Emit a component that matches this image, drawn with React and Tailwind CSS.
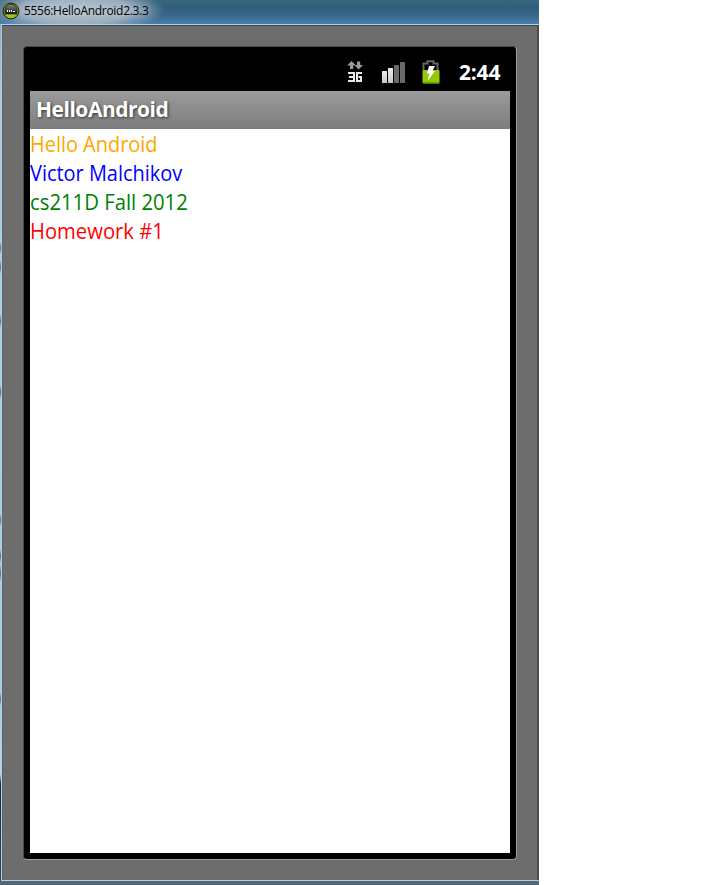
const lines = [
  { text: "Hello Android", color: "text-[#ffa500]", fit: "scale-x-[0.906]" },
  { text: "Victor Malchikov", color: "text-[#0000ff]", fit: "scale-x-[0.906]" },
  { text: "cs211D Fall 2012", color: "text-[#008000]", fit: "scale-x-[0.922]" },
  { text: "Homework #1", color: "text-[#ff0000]", fit: "scale-x-[0.920]" },
];

function AppIcon() {
  return (
    <svg width="18" height="18" viewBox="0 0 18 18" className="shrink-0">
      <defs>
        <linearGradient id="dome" x1="0" y1="0" x2="0" y2="1">
          <stop offset="0" stopColor="#8a8a8a" />
          <stop offset="1" stopColor="#111" />
        </linearGradient>
      </defs>
      <circle cx="9" cy="9" r="7.900" fill="#86a91f" stroke="#172006" strokeWidth="1" />
      <path d="M3 12V8a6 5.600 0 0 1 12 0v4z" fill="url(#dome)" stroke="#20240f" strokeWidth=".7" />
      <path d="M5 8h1v2H5zM7 8h1v2H7zM9 8h1v2H9zM11 9h2v1h-2z" fill="#fff" />
      <path d="M4.500 13.500h9M6 15.200h6" stroke="#a5dc16" strokeWidth="1.500" strokeDasharray="2 .7" />
    </svg>
  );
}

function NetworkIcon() {
  return (
    <svg width="18" height="26" viewBox="0 0 18 26">
      <path d="M4.500 1L9 5.500H6.200V9H3V5.500H0z" fill="#9a9a9a" />
      <path d="M10 1.500h3.200V5H16l-4.500 4.500L7.500 5H10z" fill="#9a9a9a" />
      <path d="M1 13h6v8H1M2 17h5" fill="none" stroke="#e8e8e8" strokeWidth="2" />
      <path d="M15 13H10v8h4v-4h-2.500" fill="none" stroke="#e8e8e8" strokeWidth="2" />
    </svg>
  );
}

function SignalIcon() {
  return (
    <svg width="24" height="22" viewBox="0 0 24 22">
      <defs>
        <linearGradient id="bar" x1="0" y1="0" x2="0" y2="1">
          <stop offset="0" stopColor="#ececec" />
          <stop offset="1" stopColor="#c8c8c8" />
        </linearGradient>
      </defs>
      <rect x="0" y="9" width="5" height="12" rx=".5" fill="url(#bar)" />
      <rect x="6" y="6" width="5" height="15" rx=".5" fill="url(#bar)" />
      <rect x="12" y="3" width="5" height="18" rx=".5" fill="#6a6a6a" />
      <rect x="18" y="0" width="5" height="21" rx=".5" fill="#6a6a6a" />
    </svg>
  );
}

function BatteryIcon() {
  return (
    <svg width="18" height="24" viewBox="0 0 18 24">
      <path d="M1.500 10V3.500H5.500V1.200h6v2.300h4V10" fill="none" stroke="#666" strokeWidth="2" />
      <rect x=".5" y="10" width="17" height="13.500" rx="1" fill="#93c90a" />
      <path d="M1 22.500h16" stroke="#74a500" strokeWidth="1.500" />
      <path d="M7 6h6l-2.500 5H13L5.500 21l2-7.500H5z" fill="#fff" />
    </svg>
  );
}

export default function App() {
  return (
    <div className="h-[885px] w-[705px] overflow-hidden bg-white">
      <div className="flex h-full w-[539px] flex-col bg-[#526579]">
        <div className="flex h-6 shrink-0 items-start bg-[radial-gradient(ellipse_90px_24px_at_75px_10px,#b1c0cb_0%,#9baebd_60%,transparent_100%),linear-gradient(to_bottom,#376582_0%,#315e79_30%,#386588_60%,#4b7dab_100%)] pl-[2px] pt-[2px]">
          <AppIcon />
          <span className="ml-[4px] whitespace-nowrap font-['Open_Sans',sans-serif] text-[12px] leading-[18px] tracking-[-0.3px] text-black [text-shadow:0_0_6px_#dce6ec]">
            5556:HelloAndroid2.3.3
          </span>
        </div>
        <div className="flex h-[857px] shrink-0 bg-[linear-gradient(to_bottom,#8eaac2_0px,#a9c8e5_70px,#a7d0f5_217px,#58708a_224px,#a7d0f5_231px,#a7d0f5_236px,#58708a_243px,#a7d0f5_250px,#a7d0f5_290px,#58708a_297px,#a7d0f5_304px,#a7d0f5_361px,#4d6278_368px,#a7d0f5_375px,#a7cff3_489px,#58708a_496px,#a7cff3_503px,#a7cff3_525px,#58708a_532px,#a7cff3_540px,#58708a_550px,#a7cff3_558px,#a7cff3_668px,#58708a_675px,#a7cff3_682px,#b0d5f7_750px,#202a35_760px,#38434e_100%)] pl-px">
          <div className="flex flex-1 border-y border-l border-[#b6cfdf]">
            <div className="flex-1 border-l border-r-2 border-t border-l-[#5e6367] border-r-[#4c4c4c] border-t-[#344b5d] bg-[#6d6d6d] pl-5 pt-5">
              <div className="h-[814px] w-[494px] rounded-[4px] border border-b-[#a0a0a0] border-l-[#4b4b4b] border-r-[#a0a0a0] border-t-[#4b4b4b] bg-black px-[6px]">
                <div className="flex h-11 items-start pl-[317px]">
                  <div className="mt-[13px]"><NetworkIcon /></div>
                  <div className="ml-[17px] mt-[15px]"><SignalIcon /></div>
                  <div className="ml-[16px] mt-[13px]"><BatteryIcon /></div>
                  <span className="ml-[19px] mt-[11px] whitespace-nowrap font-['Open_Sans',sans-serif] text-[21px] font-bold leading-[29px] tracking-[-0.2px] text-white">2:44</span>
                </div>
                <div className="flex h-[38px] items-start bg-linear-to-b from-[#9b9b9b] to-[#7d7d7d] pl-[6px]">
                  <span className="whitespace-nowrap font-['Open_Sans',sans-serif] text-[21px] font-bold leading-[36px] tracking-[-0.480px] text-white [text-shadow:1px_1px_3px_#333]">HelloAndroid</span>
                </div>
                <div className="h-[724px] bg-white">
                  {lines.map((line) => (
                    <div key={line.text} className={`h-[29px] origin-left whitespace-nowrap font-['Open_Sans',sans-serif] text-[22px] leading-[29px] ${line.fit} ${line.color}`}>
                      {line.text}
                    </div>
                  ))}
                </div>
              </div>
            </div>
          </div>
        </div>
      </div>
    </div>
  );
}
